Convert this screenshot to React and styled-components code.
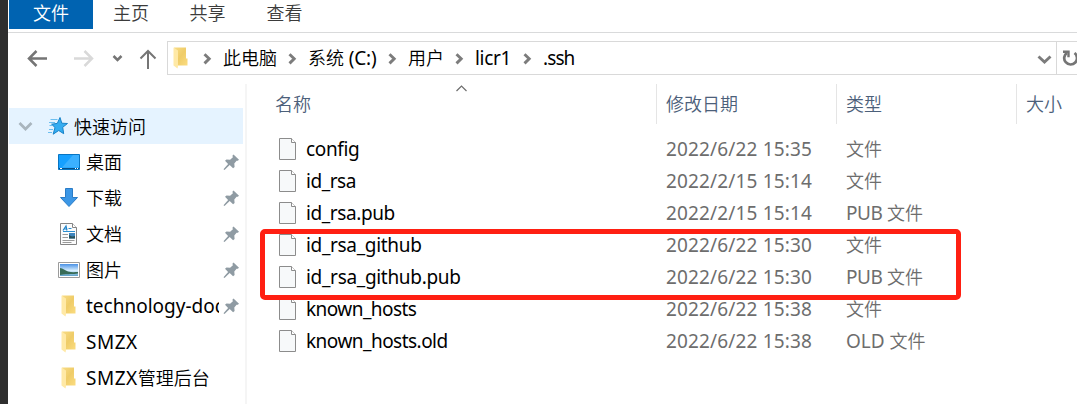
import React from "react";
import styled, { createGlobalStyle } from "styled-components";

const Global = createGlobalStyle`
  * { box-sizing: border-box; }
  body { margin: 0; background: #fff; overflow: hidden; }
  svg { display: block; flex: none; }
`;

const Window = styled.div`
  display: flex;
  width: 1077px;
  height: 404px;
  overflow: hidden;
  background: #fff;
  font: 350 18px/32px "Noto Sans", "Noto Sans CJK SC", sans-serif;
  color: #000;
  white-space: nowrap;
`;
const Edge = styled.div`
  flex: none;
  width: 8px;
  background: #2e2e2e;
`;
const Main = styled.div`
  flex: 1;
  min-width: 0;
  display: flex;
  flex-direction: column;
`;
const Latin = styled.span`
  font-size: 19px;
  font-weight: 400;
  letter-spacing: ${(p) => p.$track || 0}px;
`;

const Ribbon = styled.nav`
  display: flex;
  height: 33px;
  padding-left: 1px;
  border-bottom: 1px solid #d9dadb;
`;
const Tab = styled.div`
  width: ${(p) => p.$width}px;
  height: 29px;
  line-height: 26px;
  text-align: center;
  color: ${(p) => (p.$active ? "#fff" : "#3b3b3b")};
  background: ${(p) => (p.$active ? "#0063b1" : "transparent")};
`;

const NavBar = styled.div`
  display: flex;
  height: 51px;
  padding-top: 8px;
`;
const NavButtons = styled.div`
  flex: none;
  width: 159px;
  height: 34px;
`;
const Address = styled.div`
  display: flex;
  flex: none;
  width: 890px;
  height: 34px;
  border: 1px solid #d9d9d9;
  padding-left: 5px;
`;
const FolderSlot = styled.div`
  flex: none;
  width: 24px;
  padding-top: 5px;
`;
const Crumb = styled.div`
  display: flex;
  width: ${(p) => p.$width}px;
  flex: none;
`;
const CrumbChevron = styled.div`
  width: ${(p) => p.$gap}px;
  flex: none;
  padding: 10px 0 0 6px;
`;
const DropSlot = styled.div`
  margin-left: auto;
  padding: 13px 4px 0 0;
`;
const Refresh = styled.div`
  flex: none;
  width: 40px;
  height: 34px;
  border: 1px solid #d9d9d9;
  border-left: 0;
  padding: 7px 0 0 5px;
`;

const Body = styled.div`
  display: flex;
  flex: 1;
`;
const Sidebar = styled.aside`
  flex: none;
  width: 239px;
  padding: 24px 2px 0 1px;
  border-right: 2px solid #f5f5f5;
`;
const SideRow = styled.div`
  display: flex;
  height: 36px;
  line-height: 36px;
  padding-left: ${(p) => (p.$root ? 9 : 49)}px;
  align-items: center;
  background: ${(p) => (p.$root ? "#e5f3ff" : "transparent")};
`;
const SideIcon = styled.div`
  flex: none;
  width: ${(p) => p.$width}px;
`;
const SideLabel = styled.div`
  width: ${(p) => (p.$root ? "auto" : "133px")};
  padding-top: ${(p) => (p.$nudge ? 1 : 0)}px;
  flex: none;
  overflow: hidden;
`;
const PinSlot = styled.div`
  padding-left: 4px;
`;

const Content = styled.main`
  position: relative;
  flex: 1;
`;
const Header = styled.div`
  display: flex;
  height: 40px;
  line-height: 41px;
  color: #4c607a;
`;
const HeadCell = styled.div`
  flex: none;
  width: ${(p) => p.$width}px;
  padding-left: ${(p) => p.$pad}px;
  border-right: 1px solid #e5e5e5;
  &:last-child { border: 0; }
`;
const SortMark = styled.div`
  position: absolute;
  left: 208px;
  top: 0;
`;
const Rows = styled.div`
  padding-top: 9px;
`;
const Row = styled.div`
  display: flex;
  height: 32px;
  color: #6d6d6d;
`;
const FileIconSlot = styled.div`
  flex: none;
  width: 59px;
  padding: 5px 0 0 32px;
`;
const Name = styled.div`
  flex: none;
  width: 360px;
  color: #000;
`;
const DateCell = styled.div`
  flex: none;
  width: 180px;
`;
const TypeCell = styled.div`
  flex: none;
`;
const Highlight = styled.div`
  position: absolute;
  left: 13px;
  top: 145px;
  width: 701px;
  height: 71px;
  border: 5px solid #ff1f12;
  border-radius: 5px;
`;

const Folder = () => (
  <svg width="15" height="22" viewBox="0 0 15 22">
    <defs>
      <linearGradient id="fold" x1="0" x2="1" y1="0" y2="1">
        <stop offset="0" stopColor="#f8dc85" />
        <stop offset=".5" stopColor="#efcc68" />
        <stop offset="1" stopColor="#fbdc80" />
      </linearGradient>
    </defs>
    <path d="M1 .5h12v11h1.500v7H3z" fill="url(#fold)" />
    <path d="M.5.500 5 3.500V19l-.5 2.500L.5 18.500z" fill="#ffe9a6" />
  </svg>
);
const Star = () => (
  <svg width="21" height="20" viewBox="0 0 21 20">
    <path d="m12 1.500 1.800 5.700 5.700.3-4.800 3.800 1 6.400-5-3.200-5.500 3.700 1.800-6.700-3.400-3.300 5.700-.8z" fill="#35adf1" stroke="#1782c8" strokeWidth="1" />
    <path d="M2.500 3.500h7M1 6.500h6M1.500 9.500h2.500M1 13.500h4M0 16.500h4" stroke="#6cbff0" strokeWidth="1" />
  </svg>
);
const Desktop = () => (
  <svg width="22" height="16" viewBox="0 0 22 16">
    <path d="M.5.5h21v15H.5z" fill="#16a0ff" stroke="#0875c2" />
    <path d="M15 1h6v12.500H4z" fill="#3bb0ff" />
    <path d="M1 14.500h20" stroke="#064f87" />
    <path d="M2 14.500h2M17 14.500h1M19 14.500h1" stroke="#fff" />
  </svg>
);
const Download = () => (
  <svg width="19" height="20" viewBox="0 0 19 20">
    <path d="M5.500.5h7v9h5l-8.500 9-8.500-9h5z" fill="#3c97e6" stroke="#2a7cc7" />
  </svg>
);
const Doc = () => (
  <svg width="18" height="22" viewBox="0 0 18 22">
    <path d="M.5.500h12l4 4v17H.5z" fill="#fcfcfc" stroke="#858585" />
    <path d="M12.500.5v4h4" fill="#fff" stroke="#858585" />
    <path d="m3 7.500 3-4.500 1 4.500M4 6h3" stroke="#1f83c9" strokeWidth="1.200" fill="none" />
    <path d="M8.500 5.500h3M3 8.500h12" stroke="#2d8ecf" />
    <path d="M2.500 11.500H8M2.500 14.500H8M2.500 17.500h12M2.500 19.500h9" stroke="#9a9a9a" />
    <path d="M9 10h6v5.500H9z" fill="#3f86bf" />
    <path d="m9 12 3 1.500 3-.5v2.500H9z" fill="#28525c" />
  </svg>
);
const Picture = () => (
  <svg width="22" height="16" viewBox="0 0 22 16">
    <defs>
      <linearGradient id="sky" x2="0" y2="1">
        <stop offset="0" stopColor="#4a91e5" />
        <stop offset=".55" stopColor="#d7efff" />
        <stop offset="1" stopColor="#5a9fc7" />
      </linearGradient>
    </defs>
    <path d="M.5.500h21v15H.5z" fill="#fff" stroke="#9b9b9b" />
    <path d="M2 2h18v12H2z" fill="url(#sky)" />
    <path d="M2 6c3 .3 5 2.300 8 3.500 4 1 7 .5 10 .5v1.500c-5 1-9 0-18 1.500z" fill="#386c57" />
  </svg>
);
const Pin = () => (
  <svg width="17" height="17" viewBox="0 0 17 17">
    <path d="m10.500.5 5.500 5.300-1.200 1-1.200-.1-2.300 2.800.3 3.500-1.500 1.300-3.400-3.400L1.500 16 .5 15.300l4.600-5.400L2 6.800l1.500-1.200 3.600.2 2.800-2.500-.5-1.500z" fill="#8f9ba3" />
  </svg>
);
const File = () => (
  <svg width="18" height="23" viewBox="0 0 18 23">
    <path d="M.5.500h12l4 4v17H.5z" fill="#f7f9fa" stroke="#8c8c8c" />
    <path d="M12.500.5v4h4" fill="#fff" stroke="#8c8c8c" />
  </svg>
);
const Chevron = () => (
  <svg width="9" height="14" viewBox="0 0 9 14">
    <path d="m1.500 2.200 4.700 4.600-4.700 4.600" fill="none" stroke="#7c7c7c" strokeWidth="2.900" />
  </svg>
);
const NavArrows = () => (
  <svg width="159" height="34" viewBox="0 0 159 34" fill="none" stroke="#757575">
    <path d="M39 17.500H21M28.500 10 21 17.500l7.500 7.500" strokeWidth="2.500" />
    <path d="M66 17.500h18M76.500 10l7.500 7.500-7.500 7.500" stroke="#d9d9d9" strokeWidth="2.500" />
    <path d="m105.500 15 4 4 4-4" strokeWidth="2.500" />
    <path d="M140 28V10M132.500 17.500 140 10l7.500 7.500" strokeWidth="2" />
  </svg>
);

const sideItems = [
  { icon: <Desktop />, text: "桌面", pin: true },
  { icon: <Download />, text: "下载", pin: true, inset: 2 },
  { icon: <Doc />, text: "文档", pin: true, inset: 2 },
  { icon: <Picture />, text: "图片", pin: true },
  { icon: <Folder />, latin: "technology-docs", pin: true, inset: 3 },
  { icon: <Folder />, latin: "SMZX", inset: 3, track: 0.5 },
  { icon: <Folder />, latin: "SMZX", text: "管理后台", inset: 3, track: 0.5 },
];
const IconInset = styled.div`
  padding-left: ${(p) => p.$inset || 0}px;
`;

const files = [
  ["config", -0.35, "2022/6/22 15:35", ""],
  ["id_rsa", -0.45, "2022/2/15 15:14", ""],
  ["id_rsa.pub", -0.4, "2022/2/15 15:14", "PUB "],
  ["id_rsa_github", -0.32, "2022/6/22 15:30", ""],
  ["id_rsa_github.pub", -0.31, "2022/6/22 15:30", "PUB "],
  ["known_hosts", -0.55, "2022/6/22 15:38", ""],
  ["known_hosts.old", -0.53, "2022/6/22 15:38", "OLD "],
];

export default function App() {
  return (
    <Window>
      <Global />
      <Edge />
      <Main>
        <Ribbon>
          <Tab $width={84} $active>文件</Tab>
          <Tab $width={76}>主页</Tab>
          <Tab $width={77}>共享</Tab>
          <Tab $width={77}>查看</Tab>
        </Ribbon>
        <NavBar>
          <NavButtons><NavArrows /></NavButtons>
          <Address>
            <FolderSlot><Folder /></FolderSlot>
            <CrumbChevron $gap={26}><Chevron /></CrumbChevron>
            <Crumb $width={59}>此电脑</Crumb>
            <CrumbChevron $gap={26}><Chevron /></CrumbChevron>
            <Crumb $width={74}>系统<Latin $track={-0.2}>&nbsp;(C:)</Latin></Crumb>
            <CrumbChevron $gap={26}><Chevron /></CrumbChevron>
            <Crumb $width={41}>用户</Crumb>
            <CrumbChevron $gap={26}><Chevron /></CrumbChevron>
            <Crumb $width={42}><Latin $track={-0.3}>licr1</Latin></Crumb>
            <CrumbChevron $gap={26}><Chevron /></CrumbChevron>
            <Crumb $width={50}><Latin $track={-0.9}>.ssh</Latin></Crumb>
            <DropSlot>
              <svg width="15" height="10" viewBox="0 0 15 10">
                <path d="m1.500 1.500 6 5.500 6-5.500" fill="none" stroke="#7c7c7c" strokeWidth="2.900" />
              </svg>
            </DropSlot>
          </Address>
          <Refresh>
            <svg width="20" height="20" viewBox="0 0 20 20" fill="none" stroke="#757575" strokeWidth="2.700">
              <path d="M5 3.800A6.400 6.400 0 1 0 12.500 4" />
              <path d="M1 2.700h5.500v5.500" strokeWidth="2.400" />
            </svg>
          </Refresh>
        </NavBar>
        <Body>
          <Sidebar>
            <SideRow $root>
              <SideIcon $width={30}>
                <svg width="15" height="11" viewBox="0 0 15 11">
                  <path d="m1.500 2 6 6 6-6" fill="none" stroke="#a9b5be" strokeWidth="2.700" />
                </svg>
              </SideIcon>
              <SideIcon $width={26}><Star /></SideIcon>
              <SideLabel $root $nudge>快速访问</SideLabel>
            </SideRow>
            {sideItems.map((s, i) => (
              <SideRow key={i}>
                <SideIcon $width={28}><IconInset $inset={s.inset}>{s.icon}</IconInset></SideIcon>
                <SideLabel>{s.latin && <Latin $track={s.track}>{s.latin}</Latin>}{s.text}</SideLabel>
                {s.pin && <PinSlot><Pin /></PinSlot>}
              </SideRow>
            ))}
          </Sidebar>
          <Content>
            <SortMark>
              <svg width="13" height="9" viewBox="0 0 13 9">
                <path d="m1.500 7 5-5 5 5" fill="none" stroke="#6d6d6d" strokeWidth="1.200" />
              </svg>
            </SortMark>
            <Header>
              <HeadCell $width={410} $pad={28}>名称</HeadCell>
              <HeadCell $width={180} $pad={9}>修改日期</HeadCell>
              <HeadCell $width={180} $pad={9}>类型</HeadCell>
              <HeadCell $width={60} $pad={9}>大小</HeadCell>
            </Header>
            <Rows>
              {files.map(([name, track, date, kind]) => (
                <Row key={name}>
                  <FileIconSlot><File /></FileIconSlot>
                  <Name><Latin $track={track}>{name}</Latin></Name>
                  <DateCell><Latin $track={0.16}>{date}</Latin></DateCell>
                  <TypeCell>{kind && <Latin $track={kind === "PUB " ? -0.4 : 0}>{kind}</Latin>}文件</TypeCell>
                </Row>
              ))}
            </Rows>
            <Highlight />
          </Content>
        </Body>
      </Main>
    </Window>
  );
}
